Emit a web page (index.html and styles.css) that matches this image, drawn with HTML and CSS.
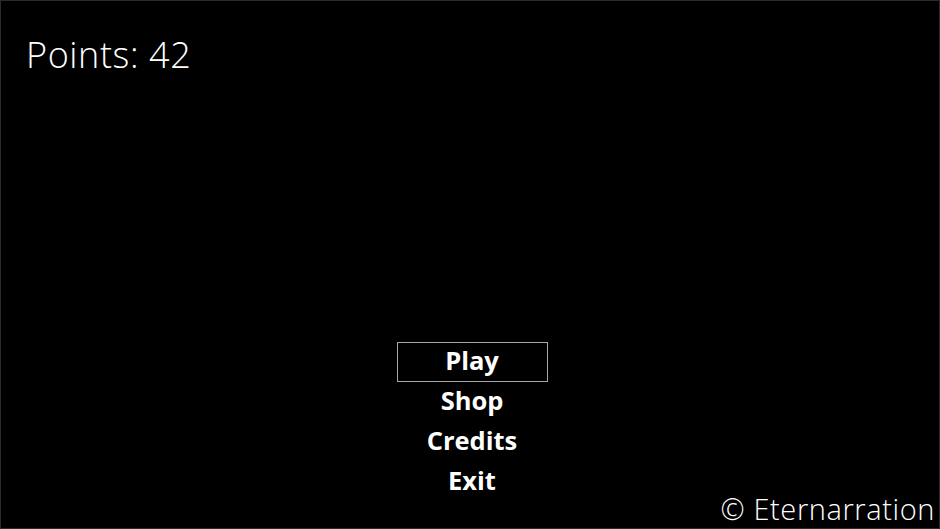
FILE: index.html
```html
<!DOCTYPE html>
<html>
<head>
<meta charset="utf-8">
<link rel="stylesheet" href="styles.css">
</head>
<body>
<div class="screen">
  <div class="points">Points: 42</div>
  <nav class="menu">
    <div class="item selected">Play</div>
    <div class="item">Shop</div>
    <div class="item">Credits</div>
    <div class="item">Exit</div>
  </nav>
  <div class="copyright">© Eternarration</div>
</div>
</body>
</html>
```
FILE: styles.css
```css
html, body {
  margin: 0;
  padding: 0;
  background: #000;
}
.screen {
  box-sizing: border-box;
  width: 940px;
  height: 529px;
  border: 1px solid #2a2a2a;
  background: #000;
  color: #fff;
  font-family: "Open Sans", "Noto Sans", sans-serif;
  display: grid;
  grid-template-columns: 1fr 151px 1fr;
  grid-template-rows: auto 1fr auto;
}
.points {
  grid-column: 1 / -1;
  grid-row: 1;
  font-size: 36px;
  font-weight: 300;
  letter-spacing: 0.6px;
  line-height: 40px;
  padding: 34px 0 0 25px;
}
.menu {
  grid-column: 2;
  grid-row: 3;
  display: flex;
  flex-direction: column;
  margin: 0 -2px 0 2px;
  padding-bottom: 26px;
}
.item {
  box-sizing: border-box;
  height: 40px;
  line-height: 34px;
  text-align: center;
  font-size: 25.5px;
  font-weight: 700;
  border: 1px solid transparent;
}
.item.selected {
  border-color: #a8a8a8;
}
.copyright {
  grid-column: 3;
  grid-row: 3;
  justify-self: end;
  align-self: end;
  font-size: 29px;
  font-weight: 300;
  letter-spacing: 0.6px;
  line-height: 32px;
  padding: 0 4px 3px 0;
  white-space: nowrap;
}
```
